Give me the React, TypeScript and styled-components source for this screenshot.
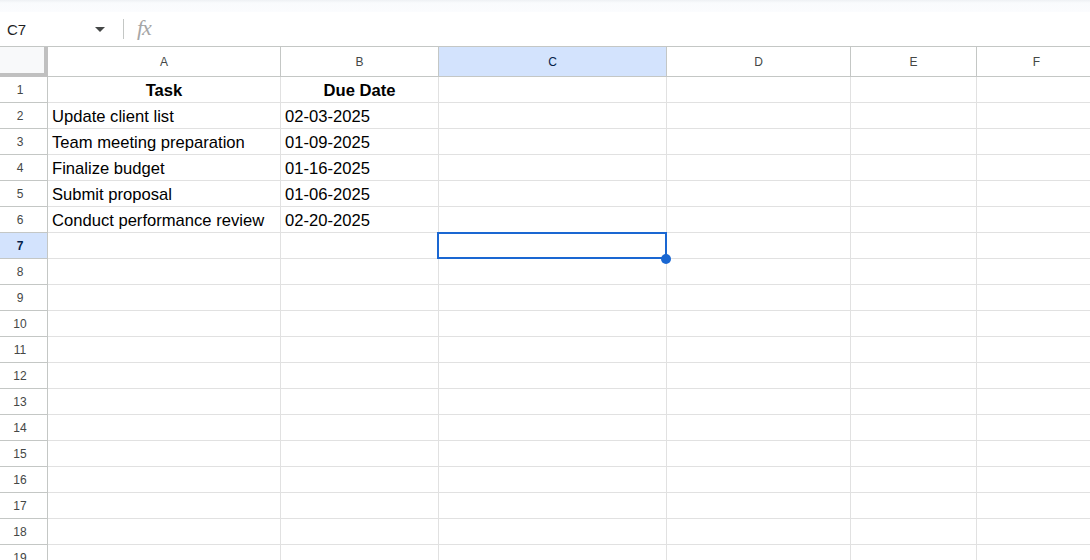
import React from "react";
import styled, { createGlobalStyle, css } from "styled-components";

const GlobalStyle = createGlobalStyle`
  html, body {
    margin: 0;
    padding: 0;
    background: #ffffff;
    overflow: hidden;
    font-family: Arial, "Liberation Sans", sans-serif;
  }
`;

const columns = [
  { key: "A", width: 233 },
  { key: "B", width: 158 },
  { key: "C", width: 228 },
  { key: "D", width: 184 },
  { key: "E", width: 126 },
  { key: "F", width: 120 },
];

const data: string[][] = [
  ["Task", "Due Date"],
  ["Update client list", "02-03-2025"],
  ["Team meeting preparation", "01-09-2025"],
  ["Finalize budget", "01-16-2025"],
  ["Submit proposal", "01-06-2025"],
  ["Conduct performance review", "02-20-2025"],
];

const ROW_COUNT = 19;
const selected = { col: "C", row: 7 };

const App: React.FC = () => {
  const template = `48px ${columns.map((c) => `${c.width}px`).join(" ")}`;

  return (
    <Page>
      <GlobalStyle />
      <TopStrip />
      <FormulaBar>
        <NameBox>
          <NameText>C7</NameText>
          <Caret />
        </NameBox>
        <Divider />
        <FxLabel>fx</FxLabel>
      </FormulaBar>
      <Grid style={{ gridTemplateColumns: template }}>
        <Corner />
        {columns.map((c) => (
          <ColHeader key={c.key} $active={c.key === selected.col}>
            {c.key}
          </ColHeader>
        ))}
        {Array.from({ length: ROW_COUNT }, (_, i) => {
          const row = i + 1;
          const values = data[i] || [];
          return (
            <React.Fragment key={row}>
              <RowHeader $active={row === selected.row}>{row}</RowHeader>
              {columns.map((c, ci) => {
                const isSel = c.key === selected.col && row === selected.row;
                return (
                  <Cell key={c.key} $header={row === 1}>
                    {values[ci] || ""}
                    {isSel && (
                      <Selection>
                        <Handle />
                      </Selection>
                    )}
                  </Cell>
                );
              })}
            </React.Fragment>
          );
        })}
      </Grid>
    </Page>
  );
};

export default App;

const Page = styled.div`
  width: 1090px;
  height: 560px;
  overflow: hidden;
  display: flex;
  flex-direction: column;
`;

const TopStrip = styled.div`
  flex-shrink: 0;
  height: 12px;
  background: linear-gradient(180deg, #eef1f4 0%, #f9fbfd 25%, #fbfcfe 100%);
`;

const FormulaBar = styled.div`
  flex-shrink: 0;
  height: 34px;
  display: flex;
  align-items: center;
  background: #ffffff;
`;

const NameBox = styled.div`
  width: 114px;
  display: flex;
  align-items: center;
  justify-content: space-between;
  padding: 0 9px 0 7px;
  box-sizing: border-box;
`;

const NameText = styled.span`
  font-size: 15px;
  color: #1f1f1f;
  font-family: Arial, "Liberation Sans", sans-serif;
`;

const Caret = styled.span`
  width: 0;
  height: 0;
  border-left: 5px solid transparent;
  border-right: 5px solid transparent;
  border-top: 5px solid #444746;
`;

const Divider = styled.div`
  width: 1px;
  height: 20px;
  background: #c4c7c5;
  margin: 0 13px 0 9px;
`;

const FxLabel = styled.span`
  font-family: "Liberation Serif", "DejaVu Serif", serif;
  font-style: italic;
  font-size: 22px;
  color: #a6a6a6;
  letter-spacing: -1px;
  margin-top: -3px;
`;

const Grid = styled.div`
  flex-shrink: 0;
  display: grid;
  grid-auto-rows: 26px;
  grid-template-rows: 30px;
  border-top: 1px solid #c4c7c5;
`;

const Corner = styled.div`
  background: #f8f9fa;
  border-right: 4px solid #c0c0c0;
  border-bottom: 4px solid #c0c0c0;
  box-sizing: border-box;
`;

const ColHeader = styled.div<{ $active: boolean }>`
  display: flex;
  align-items: center;
  justify-content: center;
  box-sizing: border-box;
  border-right: 1px solid #c4c7c5;
  border-bottom: 1px solid #c4c7c5;
  font-size: 12px;
  color: #444746;
  background: #ffffff;
  padding-top: 1px;
  ${(p) =>
    p.$active &&
    css`
      background: #d3e3fd;
      color: #041e49;
    `}
`;

const RowHeader = styled.div<{ $active: boolean }>`
  display: flex;
  align-items: center;
  justify-content: center;
  box-sizing: border-box;
  border-right: 1px solid #c4c7c5;
  border-bottom: 1px solid #c4c7c5;
  font-size: 12px;
  color: #444746;
  background: #ffffff;
  padding-right: 7px;
  ${(p) =>
    p.$active &&
    css`
      background: #d3e3fd;
      color: #041e49;
      font-weight: bold;
    `}
`;

const Cell = styled.div<{ $header: boolean }>`
  position: relative;
  display: flex;
  align-items: center;
  box-sizing: border-box;
  border-right: 1px solid #e1e1e1;
  border-bottom: 1px solid #e1e1e1;
  padding: 2px 4px 0;
  font-size: 16.6px;
  color: #000000;
  white-space: nowrap;
  ${(p) =>
    p.$header &&
    css`
      justify-content: center;
      font-weight: bold;
    `}
`;

const Selection = styled.div`
  position: absolute;
  top: -1px;
  left: -2px;
  right: -1px;
  bottom: -1px;
  border: 2px solid #1a67d2;
  pointer-events: none;
  z-index: 1;
`;

const Handle = styled.div`
  position: absolute;
  right: -6px;
  bottom: -7px;
  width: 10px;
  height: 10px;
  border-radius: 50%;
  background: #1a67d2;
`;
